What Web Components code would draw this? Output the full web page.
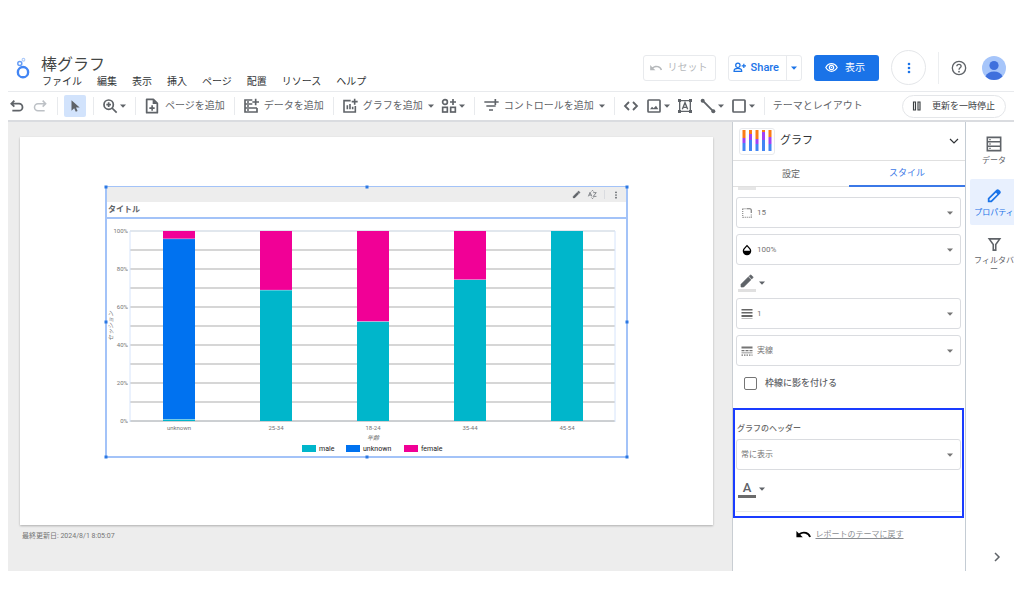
<!DOCTYPE html>
<html lang="ja">
<head>
<meta charset="utf-8">
<title>棒グラフ</title>
<style>
  body { margin: 0; padding: 46px 10px 42px 8px; background: #fff; color: #5f6368;
    font-family: Roboto, "Noto Sans CJK JP", sans-serif; font-size: 10px; line-height: 16px; }
</style>
</head>
<body>
<report-app></report-app>
<script>
const ICONS = {
  undo: '<path d="M8 4 3.500 8.500 8 13M4 8.500h11a5 5 0 0 1 0 10.500H5" fill="none" stroke="currentColor" stroke-width="2.700"/>',
  redo: '<path d="m16 4 4.500 4.500L16 13M20 8.500H9A5 5 0 0 0 9 19h10" fill="none" stroke="currentColor" stroke-width="2.300"/>',
  pointer: '<path d="M6 2v18l4.600-4.300L13.400 22l3-1.300-2.700-6.200H20z" fill="currentColor"/>',
  zoom: '<g fill="none" stroke="currentColor" stroke-width="2.600"><circle cx="10" cy="10" r="7"/><path d="m15 15 7 7M10 6.500v7M6.500 10h7"/></g>',
  page: '<path d="M4 2h10l6 6v14H4z" fill="none" stroke="currentColor" stroke-width="2.600" stroke-linejoin="round"/><path d="M13 2v7h7zM11 11h2.400v3H16v2.400h-2.600V19H11v-2.600H8V14h3z" fill="currentColor"/>',
  data: '<path d="M14 3H3v18h18v-6M3 9h11M3 15h18M6 6h3M6 12h3M6 18h3M19 1v10M14 6h10" fill="none" stroke="currentColor" stroke-width="2.500"/>',
  chart: '<path d="M13 4H3v17h17v-9M8 17v-6M12 17V9M16 17v-4M19 1v9M14.500 5.500h9" fill="none" stroke="currentColor" stroke-width="2.400"/>',
  group: '<g fill="none" stroke="currentColor" stroke-width="2.500"><circle cx="6" cy="6" r="3.600"/><rect x="2.500" y="14" width="7" height="7"/><rect x="14.500" y="14" width="7" height="7"/><path d="M18 1.500v9M13.500 6h9"/></g>',
  control: '<path d="M2 6h12M5 12h14M9 18h6M18.500 1.500v9M14 6h9.500" fill="none" stroke="currentColor" stroke-width="2.500"/>',
  code: '<path d="m9 6-6 6 6 6M15 6l6 6-6 6" fill="none" stroke="currentColor" stroke-width="2.700"/>',
  image: '<rect x="3" y="3" width="18" height="18" rx="1" fill="none" stroke="currentColor" stroke-width="2.500"/><path d="m6 17 3-4 2.500 2.500 3.500-4 3.500 5.500z" fill="currentColor"/>',
  textbox: '<path d="M4 4h16v16H4zM8 17l4-10 4 10M9.500 14h5" fill="none" stroke="currentColor" stroke-width="2"/><path d="M1.500 1.500H6V6H1.500zM18 1.500h4.500V6H18zM1.500 18H6v4.500H1.500zM18 18h4.500v4.500H18z" fill="currentColor"/>',
  line: '<path d="m4 4 16 16" stroke="currentColor" stroke-width="2.800"/><circle cx="4" cy="4" r="3" fill="currentColor"/><circle cx="20" cy="20" r="3" fill="currentColor"/>',
  rect: '<rect x="3" y="3" width="18" height="18" rx="1" fill="none" stroke="currentColor" stroke-width="2.600"/>',
  pause: '<path d="M5 4h4v16H5zM14 4h4v16h-4z" fill="none" stroke="currentColor" stroke-width="2.300"/>',
  back: '<path d="M12.500 8c-2.600 0-5 1-6.900 2.600L2 7v9h9l-3.600-3.600A8 8 0 0 1 20.100 16l2.400-.8A10.500 10.500 0 0 0 12.500 8z" fill="currentColor"/>',
  share: '<g fill="none" stroke="currentColor" stroke-width="2.300"><circle cx="9" cy="8" r="4"/><path d="M2 19v-1c0-3 4-4.200 7-4.200s7 1.200 7 4.200v1zM20 5v8M16 9h8"/></g>',
  eye: '<g fill="none" stroke="currentColor" stroke-width="2.200"><path d="M1.500 12C4 7.500 7.500 5 12 5s8 2.500 10.500 7C20 16.500 16.500 19 12 19S4 16.500 1.500 12z"/><circle cx="12" cy="12" r="4"/></g><circle cx="12" cy="12" r="1.500" fill="currentColor"/>',
  more: '<g fill="currentColor"><circle cx="12" cy="4" r="2.600"/><circle cx="12" cy="12" r="2.600"/><circle cx="12" cy="20" r="2.600"/></g>',
  help: '<g fill="none" stroke="currentColor" stroke-width="2"><circle cx="12" cy="12" r="10"/><path d="M8.800 9.500C8.800 7.500 10 6.500 12 6.500s3.200 1.200 3.200 2.900c0 2.300-3.200 2.500-3.200 5.100"/></g><circle cx="12" cy="17.500" r="1.300" fill="currentColor"/>',
  avatar: '<circle cx="12" cy="12" r="12" fill="#a6c5fa"/><circle cx="12" cy="9.500" r="4.600" fill="#3f70dd"/><path d="M3.500 20.500C5 17 8 15.500 12 15.500s7 1.500 8.500 5A12 12 0 0 1 3.500 20.500z" fill="#3f70dd"/>',
  logo: '<g fill="none"><circle cx="12" cy="16.500" r="5.600" stroke="#4285f4" stroke-width="2.600"/><circle cx="8.500" cy="7" r="2.200" stroke="#669df6" stroke-width="1.600"/><circle cx="12.500" cy="3" r="1.500" stroke="#aecbfa" stroke-width="1.200"/></g>',
  down: '<path d="M0 6h24L12 19z" fill="currentColor"/>',
  pencil: '<path d="M3 17v4h4L18 10l-4-4zM20.700 7.300a1.200 1.200 0 0 0 0-1.700l-2.300-2.300a1.200 1.200 0 0 0-1.700 0L15 5l4 4z" fill="currentColor" stroke="currentColor"/>',
  pen: '<path d="M4 20v-4L16.500 3.500a1.500 1.500 0 0 1 2 0l2 2a1.500 1.500 0 0 1 0 2L8 20z" fill="none" stroke="currentColor" stroke-width="2.600"/><path d="m14 6 4 4 3-3-4-4z" fill="currentColor"/>',
  corner: '<path d="M12 3.500h6a2.500 2.500 0 0 1 2.500 2.500v6" fill="none" stroke="currentColor" stroke-width="2.200"/><path d="M3.500 4v17M3.500 20.500H21M20.500 15v6M3 3.500h9" fill="none" stroke="currentColor" stroke-width="2" stroke-dasharray="2 2"/>',
  drop: '<path d="M12 1.500 6.500 7.500a8.500 8.500 0 1 0 11 0z" fill="#000"/><path d="M12 5 8 9.300a6 6 0 0 0-2 4.200h12a6 6 0 0 0-2-4.200z" fill="#fff"/>',
  weight: '<path d="M1 2h22v3H1zM1 8h22v3H1zM1 14h22v4H1z" fill="#666"/><path d="M1 20h22v2H1z" fill="#bbb"/>',
  dash: '<path d="M1 3h22v4H1zM1 10h6v2.500H1zM9 10h6v2.500H9zM17 10h6v2.500h-6zM1 15h22v1.500H1zM1 19h3v2.500H1zM6 19h3v2.500H6zM11 19h3v2.500h-3zM16 19h3v2.500h-3zM21 19h2v2.500h-2z" fill="#757575"/>',
  rows: '<path d="M2 2h20v20H2zM2 8.700h20M2 15.300h20" fill="none" stroke="currentColor" stroke-width="2.400"/><path d="M5 4.500h2v2H5zM5 11h2v2H5zM5 17.500h2v2H5z" fill="currentColor"/>',
  filter: '<path d="M3.500 3h17L14 12v9h-4v-9z" fill="none" stroke="currentColor" stroke-width="2.500"/>',
  chevdown: '<path d="m4 8 8 8 8-8" fill="none" stroke="currentColor" stroke-width="2.400"/>',
  chevright: '<path d="m8 4 8 8-8 8" fill="none" stroke="currentColor" stroke-width="3"/>',
  sort: '<path d="m1 17 4.500-11L10 17M2.500 13.500h6M14 7h8l-8 10h8.500M9 4l3-3 3 3M9 20l3 3 3-3" fill="none" stroke="currentColor" stroke-width="1.900"/>'
};

function define(name, css, html, setup) {
  customElements.define(name, class extends HTMLElement {
    connectedCallback() {
      if (this.shadowRoot) return;
      const root = this.attachShadow({ mode: 'open' });
      root.innerHTML = `<style>*{box-sizing:border-box}button{font:inherit;color:inherit;background:none;border:0;padding:0;margin:0;cursor:pointer}${css}</style>`
        + (typeof html === 'function' ? html(this) : html);
      if (setup) setup(root, this);
    }
  });
}

define('ui-icon', ':host{display:inline-flex;flex:none}svg{display:block;overflow:visible}', el => {
  const size = el.getAttribute('size') || 16;
  return `<svg width="${size}" height="${size}" viewBox="0 0 24 24" aria-hidden="true">${ICONS[el.getAttribute('name')]}</svg>`;
});

define('app-header', `
  :host{display:flex;align-items:center;height:46px;padding:0 8px 2px;border-bottom:1px solid #e8eaed}
  .brand{display:grid;gap:1px;margin-left:7px;padding-top:6px}
  h1{margin:0;font-size:16px;line-height:18px;font-weight:400;color:#444746;padding-top:4px}
  nav{display:flex;gap:15px;padding-left:1px}
  nav button{font-size:10px;line-height:14px;color:#303336;white-space:nowrap}
  .actions{display:flex;align-items:center;margin-left:auto;gap:12px}
  .box{display:flex;align-items:center;height:26px;border:1px solid #e8eaed;border-radius:3px;white-space:nowrap}
  .reset{gap:5px;padding:0 7px 0 5px;color:#b5b8bb}
  .split{color:#1a73e8}
  .split button{display:flex;align-items:center;height:24px}
  .share{gap:5px;padding:0 7px 0 4px;font-size:11px;font-weight:500;border-right:1px solid #e8eaed}
  .drop{padding:0 4px}
  .view{display:flex;align-items:center;gap:7px;height:26px;padding:0 14px 0 11px;border-radius:3px;background:#1a73e8;color:#fff;white-space:nowrap}
  .more{display:grid;place-items:center;width:35px;height:35px;border:1px solid #e4e6e9;border-radius:50%;color:#1a73e8}
  .rule{width:1px;height:32px;background:#eceef0}
  .help{display:flex;margin-right:3px}.me{display:flex}
`, `
  <ui-icon name="logo" size="22" style="margin-left:-4px"></ui-icon>
  <div class="brand"><h1>棒グラフ</h1>
    <nav><button>ファイル</button><button>編集</button><button>表示</button><button>挿入</button><button>ページ</button><button>配置</button><button>リソース</button><button>ヘルプ</button></nav></div>
  <div class="actions">
    <button class="box reset"><ui-icon name="back" size="14"></ui-icon>リセット</button>
    <div class="box split"><button class="share"><ui-icon name="share" size="13"></ui-icon>Share</button><button class="drop" aria-label="共有メニュー"><ui-icon name="down" size="6"></ui-icon></button></div>
    <button class="view"><ui-icon name="eye" size="13"></ui-icon>表示</button>
    <button class="more" aria-label="その他"><ui-icon name="more" size="12"></ui-icon></button>
    <span class="rule"></span>
    <button class="help" aria-label="ヘルプ"><ui-icon name="help"></ui-icon></button>
    <button class="me" aria-label="アカウント"><ui-icon name="avatar" size="24"></ui-icon></button>
  </div>`);

define('tool-button', `
  :host{display:flex;flex:none}
  button{display:flex;align-items:center;gap:5px;height:22px;white-space:nowrap;font-size:10px;line-height:16px}
  :host([menu][label]) button{gap:2px}
  :host([active]) button{background:#d2e3fc;padding:0 4px;border-radius:2px}
  :host([active]){margin:0 -2px}
  :host([disabled]){color:#bdc1c6}
`, el => `<button aria-label="${el.getAttribute('label') || ''}">${el.hasAttribute('icon') ? `<ui-icon name="${el.getAttribute('icon')}" size="${el.hasAttribute('active') ? 14 : 16}"></ui-icon>` : ''}<slot></slot>${el.hasAttribute('menu') ? '<ui-icon name="down" size="6"></ui-icon>' : ''}</button>`,
(root, el) => { if (!el.hasAttribute('label')) root.querySelector('button').removeAttribute('aria-label'); });

define('app-toolbar', `
  :host{display:flex;align-items:center;gap:7px;height:30px;padding:0 8px 0 1px;border-bottom:2px solid #dadce0;color:#5f6368}
  .rule{flex:none;width:1px;height:18px;margin:0 1px 0 2px;background:#e8eaed}
  .pause{display:flex;align-items:center;gap:9px;height:23px;margin-left:auto;padding:0 10px 0 8px;border:1px solid #e4e6e9;border-radius:12px;font-size:9px;color:#3c4043;white-space:nowrap}
`, `
  <tool-button icon="undo" label="元に戻す"></tool-button><tool-button icon="redo" label="やり直す" disabled></tool-button><span class="rule"></span>
  <tool-button icon="pointer" label="選択" active></tool-button><span class="rule"></span>
  <tool-button icon="zoom" label="ズーム" menu></tool-button><span class="rule"></span>
  <tool-button icon="page">ページを追加</tool-button><span class="rule"></span>
  <tool-button icon="data">データを追加</tool-button><span class="rule"></span>
  <tool-button icon="chart" menu>グラフを追加</tool-button>
  <tool-button icon="group" label="コミュニティ" menu></tool-button><span class="rule"></span>
  <tool-button icon="control" menu>コントロールを追加</tool-button><span class="rule"></span>
  <tool-button icon="code" label="URL の埋め込み"></tool-button>
  <tool-button icon="image" label="画像" menu></tool-button>
  <tool-button icon="textbox" label="テキスト"></tool-button>
  <tool-button icon="line" label="線" menu></tool-button>
  <tool-button icon="rect" label="図形" menu></tool-button><span class="rule"></span>
  <tool-button>テーマとレイアウト</tool-button>
  <button class="pause"><ui-icon name="pause" size="12"></ui-icon>更新を一時停止</button>`);

define('stacked-chart', ':host{display:block}svg{display:block;width:100%;height:auto;font-family:Roboto,"Noto Sans CJK JP",sans-serif}', () => {
  const left = 23, right = 508, top = 12, height = 190, step = 97, bar = 32;
  const series = [['male', '#00b6cb'], ['unknown', '#0072f0'], ['female', '#f10096']];
  const data = [['unknown', 1, 95, 4], ['25-34', 69, 0, 31], ['18-24', 52.5, 0, 47.5], ['35-44', 74.5, 0, 25.5], ['45-54', 100, 0, 0]];
  let s = '';
  for (let i = 0; i <= 10; i++) {
    const y = top + i * height / 10;
    const edge = i === 0 || i === 10;
    s += `<path d="M${left} ${y}H${right}" stroke="${i === 0 ? '#c3cfdc' : i === 10 ? '#9aa0a6' : '#c8c8c8'}" stroke-width="${edge ? 1 : 1.500}"/>`;
    if (i % 2 === 0) s += `<text x="${left - 2}" y="${y + 2}" text-anchor="end" font-size="6" fill="#757575">${100 - i * 10}%</text>`;
  }
  s += `<path d="M${left} ${top}v${height + 1}M${right} ${top}v${height + 1}" stroke="#d6e4fb"/>`;
  data.forEach(([name, ...values], i) => {
    const x = 56 + i * step;
    let y = top + height;
    values.forEach((v, k) => {
      if (!v) return;
      const h = v * height / 100;
      y -= h;
      s += `<rect x="${x}" y="${y}" width="${bar}" height="${h}" fill="${series[k][1]}"/>`;
      if (y > top + 1) s += `<path d="M${x} ${y}h${bar}" stroke="#cfe6f5"/>`;
    });
    s += `<text x="${x + bar / 2}" y="211" text-anchor="middle" font-size="6" fill="#757575">${name}</text>`;
  });
  s += '<text x="266" y="221" text-anchor="middle" font-size="6" font-style="italic" fill="#757575">年齢</text>';
  s += '<text transform="translate(6 107) rotate(-90)" text-anchor="middle" font-size="6" font-style="italic" fill="#757575">セッション</text>';
  [195, 239, 297].forEach((x, i) => {
    s += `<rect x="${x}" y="226" width="14" height="7" fill="${series[i][1]}"/><text x="${x + 17}" y="232" font-size="7" fill="#212121">${series[i][0]}</text>`;
  });
  return `<svg viewBox="0 0 519 237" role="img" aria-label="年齢別セッション">${s}</svg>`;
});

define('chart-frame', `
  :host{display:block;position:relative;border:2px solid #a3c3f8;border-top-width:1px}
  .bar{display:flex;align-items:center;justify-content:flex-end;gap:7px;height:15px;padding-right:6px;background:#ededed;color:#5f6368}
  .bar button{display:flex}
  .rule{width:1px;height:9px;background:#dadce0}
  h2{margin:0;height:15px;padding-left:1px;font-size:8px;line-height:15px;font-weight:700;color:#5f6368}
  .plot{border-top:2px solid #a3c3f8}
  i{position:absolute;width:3px;height:3px;background:#2b78e4;transform:translate(-50%,-50%)}
`, () => `<div class="bar"><button aria-label="編集"><ui-icon name="pencil" size="9"></ui-icon></button><button aria-label="並べ替え"><ui-icon name="sort" size="9"></ui-icon></button><span class="rule"></span><button aria-label="その他"><ui-icon name="more" size="8"></ui-icon></button></div>
  <h2>タイトル</h2><div class="plot"><slot></slot></div>`
  + [[0, 0], [50, 0], [100, 0], [0, 50], [100, 50], [0, 100], [50, 100], [100, 100]].map(([x, y]) =>
    `<i style="left:${x ? x === 100 ? 'calc(100% + 1px)' : '50%' : '-1px'};top:${y ? y === 100 ? 'calc(100% + 1px)' : '50%' : '0'}"></i>`).join(''));

define('report-canvas', `
  :host{display:block;padding:15px 19px 0 12px;background:#ededed}
  .sheet{padding:49px 85px 67px;background:#fff;box-shadow:0 1px 2px #0004}
  p{margin:0;padding:4px 2px;font-size:7px;line-height:14px;color:#757575}
`, `<div class="sheet"><chart-frame><stacked-chart></stacked-chart></chart-frame></div><p>最終更新日: 2024/8/1 8:05:07</p>`);

define('select-field', `
  :host{display:block}
  label{display:flex;align-items:center;gap:4px;height:31px;padding:0 7px 0 4px;border:1px solid #dadce0;border-radius:3px;background:#fff;color:#757575}
  select{flex:1;min-width:0;height:24px;appearance:none;border:0;outline:0;padding:0;background:none;color:#757575;font:inherit;font-size:8px}
  ui-icon[name=down]{pointer-events:none}
`, el => `<label>${el.hasAttribute('icon') ? `<ui-icon name="${el.getAttribute('icon')}" size="12"></ui-icon>` : ''}<select aria-label="${el.getAttribute('label')}"><option>${el.getAttribute('value')}</option></select><ui-icon name="down" size="6"></ui-icon></label>`);

define('color-picker', `
  :host{display:flex}
  button{display:flex;align-items:center;gap:3px;height:18px}
  span{display:grid;justify-items:center;align-content:end;width:18px;height:18px;font-size:13px;line-height:14px;font-weight:500;border-bottom:3px solid var(--swatch,#e0e0e0);color:#5f6368}
`, el => `<button aria-label="${el.getAttribute('label')}"><span><slot></slot></span><ui-icon name="down" size="6"></ui-icon></button>`);

define('property-panel', `
  :host{display:block;border-left:1px solid #c9ced3;border-right:1px solid #c4ccd4;background:#fff}
  .head{display:flex;align-items:center;gap:5px;height:39px;padding:0 5px 0 6px;border-bottom:1px solid #e0e0e0;font-size:11px;color:#303336;width:100%}
  .thumb{display:grid;place-items:center;width:36px;height:27px;border:1px solid #e8eaed;border-radius:3px}
  .thumb svg{display:block}
  .head ui-icon{margin-left:auto}
  .tabs{display:grid;grid-template-columns:1fr 1fr}
  .tabs button{height:26px;font-size:9px;color:#666;border-bottom:1px solid #e0e0e0}
  .tabs .on{color:#3b78e7;border-bottom:2px solid #3b78e7}
  .cut{width:18px;height:3px;margin-left:5px;background:#e6e6e6}
  .form{display:grid;gap:6px;padding:7px 4px 0 3px}
  .form color-picker,.hl color-picker{margin-left:2px}
  .form color-picker{margin-top:3px}
  .check{display:flex;align-items:center;gap:8px;height:22px;padding-left:8px;font-size:9px;font-weight:500;color:#5f6368}
  .check input{appearance:none;width:13px;height:13px;margin:0;border:1px solid #757575;border-radius:2px}
  .hl{margin:14px 1px 0 0;border:2px solid #1a3cff;padding:9px 1px 4px}
  .hl h3{margin:0;padding-left:1px;font-size:8px;line-height:20px;font-weight:500;color:#666}
  .hl color-picker{margin-top:10px;padding-bottom:13px}
  .hl hr{margin:0;border:0;border-top:1px solid #e8eaed}
  .theme{display:flex;justify-content:center;align-items:center;gap:4px;padding:8px 0 28px;font-size:8px}
  .theme a{color:#8a8d91}
`, `
  <button class="head"><span class="thumb"><svg width="30" height="22" viewBox="0 0 30 22" aria-hidden="true">${[[8, 13], [4, 10], [9, 14], [2, 10], [7, 14]].map(([a, b], i) => `<rect x="${i * 6.500 + .5}" width="3" height="${a}" fill="#fa7b17"/><rect x="${i * 6.500 + .5}" y="${a}" width="3" height="${b - a}" fill="#a142f4"/><rect x="${i * 6.500 + .5}" y="${b}" width="3" height="${21 - b}" fill="#4285f4"/>`).join('')}</svg></span>グラフ<ui-icon name="chevdown" size="12"></ui-icon></button>
  <div class="tabs" role="tablist"><button role="tab">設定</button><button role="tab" class="on" aria-selected="true">スタイル</button></div>
  <div class="cut"></div>
  <div class="form">
    <select-field icon="corner" label="枠線の半径" value="15"></select-field>
    <select-field icon="drop" label="不透明度" value="100%"></select-field>
    <color-picker label="枠線の色"><ui-icon name="pencil" size="16"></ui-icon></color-picker>
    <select-field icon="weight" label="枠線の太さ" value="1"></select-field>
    <select-field icon="dash" label="枠線のスタイル" value="実線"></select-field>
    <label class="check"><input type="checkbox">枠線に影を付ける</label>
  </div>
  <div class="hl"><h3>グラフのヘッダー</h3>
    <select-field label="グラフのヘッダー" value="常に表示"></select-field>
    <color-picker label="ヘッダーの文字色" style="--swatch:#6b6b6b">A</color-picker><hr></div>
  <div class="theme"><ui-icon name="back" size="17" style="color:#000"></ui-icon><a href="#theme">レポートのテーマに戻す</a></div>`);

define('side-rail', `
  :host{display:flex;flex-direction:column;overflow:hidden;background:#fff}
  button{display:flex;flex-direction:column;align-items:center;gap:4px;flex:none;width:48px;height:46px;margin:0 0 0 4px;padding:9px 4px 0;font-size:8px;line-height:9px;line-break:anywhere;color:#5f6368}
  button:first-of-type{margin-top:5px;margin-bottom:6px}
  .on{background:#e8f0fe;color:#1a73e8;border-radius:2px;margin-bottom:3px}
  .fold{height:24px;margin-top:auto;padding-top:4px;padding-left:10px}
`, `
  <button><ui-icon name="rows"></ui-icon>データ</button>
  <button class="on"><ui-icon name="pen"></ui-icon>プロパティ</button>
  <button><ui-icon name="filter" size="15"></ui-icon>フィルタバー</button>
  <button class="fold" aria-label="折りたたむ"><ui-icon name="chevright" size="12"></ui-icon></button>`);

define('report-app', `
  :host{display:block}
  main{display:grid;grid-template-columns:minmax(0,1fr) 234px 48px}
  side-rail{min-width:0}
`, '<app-header></app-header><app-toolbar></app-toolbar><main><report-canvas></report-canvas><property-panel></property-panel><side-rail></side-rail></main>');
</script>
</body>
</html>
